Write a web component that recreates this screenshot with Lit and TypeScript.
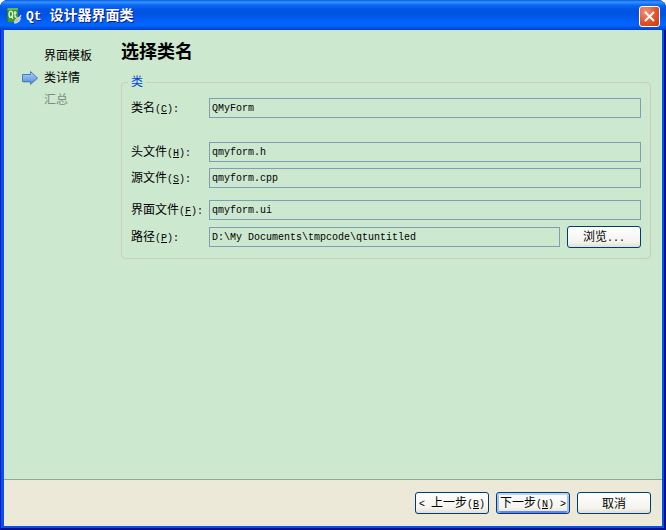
import { LitElement, html, css, svg } from "lit";
import { customElement, state } from "lit/decorators.js";

const appIcon = html`<svg width="16" height="16" viewBox="0 0 16 16" aria-hidden="true">
  <path d="M2 0H12V14H1V2Z" fill="#3d9a2c" />
  <path d="M2 0H12V2H1Z" fill="#68b553" />
  <path d="M1 2H2V14H1Z" fill="#2b7d1e" />
  <ellipse cx="4.8" cy="6.2" rx="1.8" ry="3.2" fill="none" stroke="#f2fbef" stroke-width="1.2" />
  <path d="M5 8L7 10.6M9 3V8.4Q9 9.4 10.6 9.1M7.6 5H10.8" fill="none" stroke="#f2fbef" stroke-width="1.2" />
  <path d="M15 6.5L11.8 10.2 12.8 11.2 15.4 8Z" fill="#e0e4e8" />
  <path d="M12 9.6Q8.8 10.4 8.4 15.2Q13.4 15.2 14.6 10.4Z" fill="#bcc4cc" stroke="#eef1f4" stroke-width=".7" />
</svg>`;

const arrow = html`<svg width="18" height="16" viewBox="0 0 18 16" aria-hidden="true">
  <defs>
    <linearGradient id="a" x1="0" y1="0" x2="0" y2="1">
      <stop offset="0" stop-color="#b4d2f4" />
      <stop offset="1" stop-color="#4f8de0" />
    </linearGradient>
  </defs>
  <path d="M1 12.5H8.5V15L16 8.5" fill="none" stroke="#a9c3b4" stroke-width="1" />
  <path d="M.5 4.5H8.5V1.5L15.5 8L8.5 14V11.5H.5Z" fill="url(#a)" stroke="#4a7cb8" />
</svg>`;

const cross = svg`<path d="M2 2L11 11M11 2L2 11" stroke="#fff" stroke-width="2" fill="none" />`;

interface Field {
  id: string;
  label: string;
  key: string;
  value: string;
  gap?: string;
  browse?: boolean;
}

@customElement("app-root")
export class AppRoot extends LitElement {
  static styles = css`
    :host {
      display: block;
      font: 12px/16px "Liberation Sans", "Noto Sans CJK SC", sans-serif;
      color: #000;
    }
    * { box-sizing: border-box; }
    .window {
      display: flex;
      flex-direction: column;
      min-height: 100vh;
      padding: 0 4px 4px;
      background: #0850e8;
      border-radius: 8px 8px 0 0;
      box-shadow: inset 1px 0 #0019cf, inset -2px -2px #00138c;
      overflow: hidden;
    }
    .title {
      display: flex;
      align-items: center;
      height: 30px;
      margin: 0 -4px;
      padding: 2px 6px 0;
      gap: 4px;
      background: linear-gradient(#0058e6 0, #3a93ff 2px, #0a6af4 5px, #0055e5 9px, #0054e4 15px, #0062fb 22px, #0066ff 25px, #0052dd 28px, #003dd7 30px);
      color: #fff;
      text-shadow: 1px 1px #0a1883;
    }
    .title h1 { flex: 1; margin: 0; font-size: 14px; line-height: 20px; white-space: pre; }
    .title .en { font: bold 13px/20px "Liberation Mono", monospace; }
    .close {
      display: grid;
      place-items: center;
      width: 21px;
      height: 21px;
      padding: 0;
      border: 1px solid #fff;
      border-radius: 3px;
      background: radial-gradient(circle at 30% 25%, #f0937a, #e2512a 55%, #c93a12);
    }
    .body {
      flex: 1;
      display: flex;
      padding: 8px 11px 20px 18px;
      background: #cce8cf;
    }
    ol { width: 99px; margin: 7px 0 0; padding: 0; list-style: none; flex: none; }
    li { display: flex; align-items: center; height: 22px; gap: 4px; }
    li .mark { width: 18px; height: 16px; flex: none; }
    li svg { display: block; }
    .todo { color: #7f8c80; }
    main { flex: 1; min-width: 0; }
    h2 { margin: 0 0 8px; font-size: 18px; line-height: 28px; }
    fieldset {
      min-width: 0;
      margin: 0;
      padding: 8px 9px 10px;
      border: 1px solid #d0cabc;
      border-radius: 4px;
    }
    legend { margin-left: -3px; padding: 0 3px; color: #0046d5; }
    .row { display: flex; align-items: center; margin-bottom: 6px; }
    .row:last-child { margin-bottom: 0; }
    .row.wide { margin-bottom: 12px; }
    .row.block { margin-bottom: 24px; }
    label { width: 78px; padding-top: 2px; flex: none; white-space: nowrap; }
    .en { font: 10px/16px "Liberation Mono", monospace; }
    input {
      flex: 1;
      min-width: 0;
      height: 20px;
      padding: 0 2px;
      border: 1px solid #7f9db9;
      border-radius: 0;
      background: transparent;
      color: #000;
      font: 10px/16px "Liberation Mono", monospace;
      outline: none;
    }
    .btn {
      flex: none;
      width: 74px;
      height: 22px;
      padding: 2px 0 0;
      border: 1px solid #003c74;
      border-radius: 3px;
      background: linear-gradient(#fff, #f4f3ee 75%, #e2dfd3);
      color: #000;
      font: inherit;
      white-space: pre;
    }
    .row .btn { margin-left: 7px; }
    .default { box-shadow: inset 0 2px #bcd4f6, inset 2px 0 #a5c0f0, inset -2px 0 #a5c0f0, inset 0 -2px #6982ee; }
    footer {
      display: flex;
      justify-content: flex-end;
      gap: 7px;
      padding: 12px 11px;
      border-top: 1px solid #93a794;
      background: #ece9d8;
    }
  `;

  @state() private fields: Field[] = [
    { id: "cls", label: "类名", key: "C", value: "QMyForm", gap: "block" },
    { id: "header", label: "头文件", key: "H", value: "qmyform.h" },
    { id: "source", label: "源文件", key: "S", value: "qmyform.cpp", gap: "wide" },
    { id: "form", label: "界面文件", key: "F", value: "qmyform.ui" },
    { id: "path", label: "路径", key: "P", value: "D:\\My Documents\\tmpcode\\qtuntitled", browse: true },
  ];

  render() {
    return html`<div class="window">
      <header class="title">
        ${appIcon}
        <h1><span class="en">Qt </span>设计器界面类</h1>
        <button class="close" aria-label="关闭"><svg width="13" height="13" viewBox="0 0 13 13">${cross}</svg></button>
      </header>
      <div class="body">
        <ol>
          <li><span class="mark"></span>界面模板</li>
          <li aria-current="step"><span class="mark">${arrow}</span>类详情</li>
          <li class="todo"><span class="mark"></span>汇总</li>
        </ol>
        <main>
          <h2>选择类名</h2>
          <fieldset>
            <legend>类</legend>
            ${this.fields.map((f) => html`<div class="row ${f.gap ?? ""}">
              <label for=${f.id}>${f.label}<span class="en">(<u>${f.key}</u>):</span></label>
              <input id=${f.id} .value=${f.value} spellcheck="false" />
              ${f.browse ? html`<button class="btn">浏览<span class="en">...</span></button>` : ""}
            </div>`)}
          </fieldset>
        </main>
      </div>
      <footer>
        <button class="btn"><span class="en">&lt; </span>上一步<span class="en">(<u>B</u>)</span></button>
        <button class="btn default">下一步<span class="en">(<u>N</u>) &gt;</span></button>
        <button class="btn">取消</button>
      </footer>
    </div>`;
  }
}
